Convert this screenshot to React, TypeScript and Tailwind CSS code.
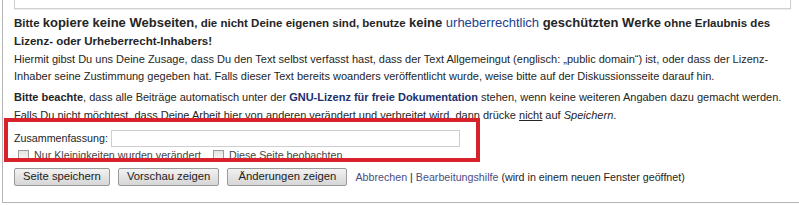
import React from 'react';

const font = { fontFamily: '"Liberation Sans", Arial, sans-serif' };

const Button: React.FC<{ label: string; pad?: string }> = ({ label, pad = 'px-[8px]' }) => (
  <button
    type="button"
    className={`h-[18px] ${pad} border border-[#9a9a9a] rounded-[2px] bg-gradient-to-b from-[#f2f2f2] to-[#d6d6d6] text-[11.3px] leading-none text-[#222]`}
  >
    {label}
  </button>
);

const Checkbox: React.FC<{ label: string }> = ({ label }) => (
  <label className="flex items-center gap-[5px]">
    <span className="w-[11px] h-[11px] border border-[#9c9c9c] bg-gradient-to-b from-[#e4e4e4] to-[#f8f8f8]" />
    <span>{label}</span>
  </label>
);

export default function App() {
  return (
    <div className="relative w-[799px] h-[205px] bg-white overflow-hidden text-[#252525]" style={font}>
      <div className="ml-[2px] h-[203px] border-l border-b border-[#b5b5b5] pl-[11px] pr-[8px]">
        {/* bottom of the edit box */}
        <div className="h-[9px] border-x border-b border-[#cfcfcf] shadow-[0_1px_1px_rgba(0,0,0,0.06)]" />

        <p className="mt-[5px] text-[11.5px] leading-[18px] font-bold whitespace-nowrap">
          Bitte <span className="text-[13px]">kopiere keine Webseiten</span>, die nicht Deine eigenen sind, benutze{' '}
          <span className="text-[13px]">
            keine <a className="font-normal text-[#23408f]">urheberrechtlich</a> geschützten Werke
          </span>{' '}
          ohne Erlaubnis des
          <br />
          Lizenz- oder Urheberrecht-Inhabers!
        </p>

        <p className="mt-[1px] text-[11px] leading-[17px] whitespace-nowrap">
          Hiermit gibst Du uns Deine Zusage, dass Du den Text selbst verfasst hast, dass der Text Allgemeingut (englisch:
          „public domain“) ist, oder dass der Lizenz-
          <br />
          Inhaber seine Zustimmung gegeben hat. Falls dieser Text bereits woanders veröffentlicht wurde, weise bitte auf
          der Diskussionsseite darauf hin.
        </p>

        <p className="mt-[3px] text-[11px] leading-[18px] whitespace-nowrap">
          <b>Bitte beachte</b>, dass alle Beiträge automatisch unter der{' '}
          <a className="font-bold text-[#1c2f6e]">GNU-Lizenz für freie Dokumentation</a> stehen, wenn keine weiteren
          Angaben dazu gemacht werden.
          <br />
          Falls Du nicht möchtest, dass Deine Arbeit hier von anderen verändert und verbreitet wird, dann drücke{' '}
          <span className="underline">nicht</span> auf <i>Speichern</i>.
        </p>

        <div className="mt-[6px] flex items-center gap-[3px] text-[10.7px]">
          <span>Zusammenfassung:</span>
          <div className="w-[349px] h-[17px] border border-[#cfcfcf] bg-white" />
        </div>

        <div className="mt-[2px] ml-[4px] h-[13px] flex items-center gap-[12px] text-[10.7px] text-[#444]">
          <Checkbox label="Nur Kleinigkeiten wurden verändert" />
          <Checkbox label="Diese Seite beobachten" />
        </div>

        <div className="mt-[6px] flex items-center gap-[8px] text-[10.7px]">
          <Button label="Seite speichern" />
          <Button label="Vorschau zeigen" />
          <Button label="Änderungen zeigen" pad="px-[10px]" />
          <span>
            <a className="text-[#4d4d82]">Abbrechen</a> | <a className="text-[#4d4d82]">Bearbeitungshilfe</a> (wird in
            einem neuen Fenster geöffnet)
          </span>
        </div>
      </div>

      {/* red annotation frame */}
      <div className="absolute left-[4px] top-[118px] w-[476px] h-[44px] border-[4px] border-[#d8222b]" />
    </div>
  );
}
